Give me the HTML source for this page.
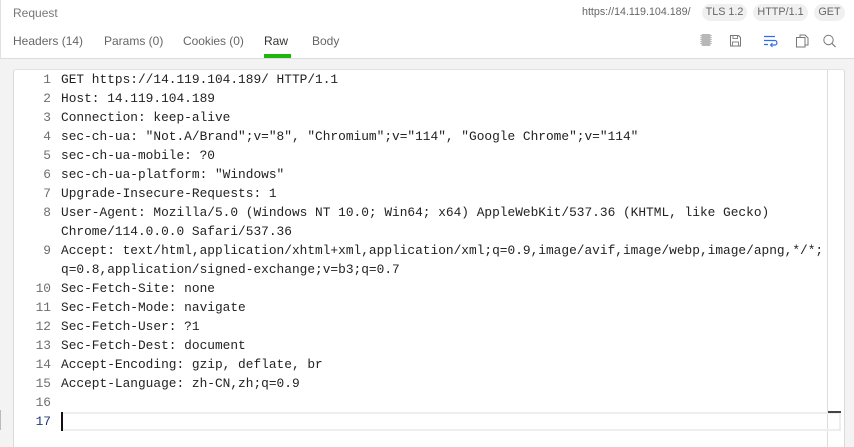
<!DOCTYPE html>
<html><head><meta charset="utf-8">
<style>
html,body{margin:0;padding:0;background:#f3f3f3}
#p{position:relative;width:854px;height:447px;overflow:hidden;background:#f3f3f3;font-family:"Liberation Sans",sans-serif}
.a{position:absolute;white-space:pre}
.t{font-size:12px;color:#666;top:34px;line-height:14px}
.b{position:absolute;top:4px;height:17px;line-height:17px;border-radius:8.500px;background:#f0f0f0;color:#666;font-size:10.800px;text-align:center;font-weight:400}
.n{position:absolute;left:14px;width:37px;text-align:right;font:12.830px/19px "Liberation Mono",monospace;color:#6e6e6e}
.l{position:absolute;left:61px;font:12.830px/19px "Liberation Mono",monospace;color:#222;white-space:pre}
</style></head><body>
<div id="p">
<div class="a" style="left:0;top:0;width:854px;height:58px;background:#fff;border-bottom:1px solid #dcdcdc"></div>
<div class="a" style="left:0;top:0;width:1px;height:58px;background:#e0e0e0"></div>
<div class="a" style="left:13px;top:6px;font-size:12px;line-height:14px;color:#777">Request</div>
<div class="a t" style="left:13px">Headers (14)</div>
<div class="a t" style="left:104px">Params (0)</div>
<div class="a t" style="left:183px;letter-spacing:-.05px">Cookies (0)</div>
<div class="a t" style="left:264px;color:#333">Raw</div>
<div class="a t" style="left:312px">Body</div>
<div class="a" style="left:264px;top:54px;width:27px;height:4px;background:#1fb50f"></div>
<div class="a" style="left:582px;top:6px;font-size:10.700px;line-height:13px;color:#666">https://14.119.104.189/</div>
<div class="b" style="left:702px;width:45px">TLS 1.2</div>
<div class="b" style="left:753px;width:55px">HTTP/1.1</div>
<div class="b" style="left:814px;width:31px">GET</div>

<svg class="a" style="left:695px;top:28px" width="150" height="24" viewBox="0 0 150 24" fill="none">
<rect x="6.500" y="6" width="9" height="12" rx="1" fill="#b8b8b8"/>
<path d="M5 7.500h1.500M5 9.500h1.500M5 11.500h1.500M5 13.500h1.500M5 15.500h1.500M15.500 7.500h1.500M15.500 9.500h1.500M15.500 11.500h1.500M15.500 13.500h1.500M15.500 15.500h1.500" stroke="#c4c4c4"/>
<path d="M35.500 7.500h8l2 2v8.500h-10z" stroke="#777"/>
<path d="M38 7.500v3h4.500v-3M37.500 18v-4h6v4" stroke="#888"/>
<path d="M69 8.500h11M69 12.500h11c2.500 0 2.500 4.500 0 4.500h-4M69 16.500h4" stroke="#2f6bf0" stroke-width="1.200"/>
<path d="M77.500 15l-2 2 2 2" stroke="#2f6bf0"/>
<path d="M105 9.500v-2.500h5l3 3v7h-3M101.500 9.500h8.500v9.500h-8.500z" stroke="#777"/>
<circle cx="133.500" cy="12" r="4.700" stroke="#777"/>
<path d="M137 15.500l3.500 3.500" stroke="#777" stroke-width="1.200"/>
</svg>

<div class="a" style="left:13px;top:69px;width:830px;height:378px;background:#fff;border-left:1px solid #dadada;border-right:1px solid #dadada;border-top:1px solid #e2e2e2;border-radius:3px 3px 0 0"></div>
<div class="a" style="left:827px;top:70px;width:1px;height:377px;background:#dcdcdc"></div>
<div class="a" style="left:61px;top:412px;width:778px;height:15px;border:2px solid #eee;border-left:0"></div>
<div class="a" style="left:828px;top:411px;width:13px;height:2px;background:#444"></div>
<div class="a" style="left:61px;top:412px;width:2px;height:19px;background:#111"></div>
<div class="a" style="left:0;top:410px;width:1px;height:20px;background:#bbb"></div>

<div class="n" style="top:70px">1</div><div class="l" style="top:70px">GET https://14.119.104.189/ HTTP/1.1</div>
<div class="n" style="top:89px">2</div><div class="l" style="top:89px">Host: 14.119.104.189</div>
<div class="n" style="top:108px">3</div><div class="l" style="top:108px">Connection: keep-alive</div>
<div class="n" style="top:127px">4</div><div class="l" style="top:127px">sec-ch-ua: "Not.A/Brand";v="8", "Chromium";v="114", "Google Chrome";v="114"</div>
<div class="n" style="top:146px">5</div><div class="l" style="top:146px">sec-ch-ua-mobile: ?0</div>
<div class="n" style="top:165px">6</div><div class="l" style="top:165px">sec-ch-ua-platform: "Windows"</div>
<div class="n" style="top:184px">7</div><div class="l" style="top:184px">Upgrade-Insecure-Requests: 1</div>
<div class="n" style="top:203px">8</div><div class="l" style="top:203px">User-Agent: Mozilla/5.0 (Windows NT 10.0; Win64; x64) AppleWebKit/537.36 (KHTML, like Gecko)</div>
<div class="l" style="top:222px">Chrome/114.0.0.0 Safari/537.36</div>
<div class="n" style="top:241px">9</div><div class="l" style="top:241px">Accept: text/html,application/xhtml+xml,application/xml;q=0.9,image/avif,image/webp,image/apng,*/*;</div>
<div class="l" style="top:260px">q=0.8,application/signed-exchange;v=b3;q=0.7</div>
<div class="n" style="top:279px">10</div><div class="l" style="top:279px">Sec-Fetch-Site: none</div>
<div class="n" style="top:298px">11</div><div class="l" style="top:298px">Sec-Fetch-Mode: navigate</div>
<div class="n" style="top:317px">12</div><div class="l" style="top:317px">Sec-Fetch-User: ?1</div>
<div class="n" style="top:336px">13</div><div class="l" style="top:336px">Sec-Fetch-Dest: document</div>
<div class="n" style="top:355px">14</div><div class="l" style="top:355px">Accept-Encoding: gzip, deflate, br</div>
<div class="n" style="top:374px">15</div><div class="l" style="top:374px">Accept-Language: zh-CN,zh;q=0.9</div>
<div class="n" style="top:393px">16</div>
<div class="n" style="top:412px;color:#23387f">17</div>
</div>
</body></html>
